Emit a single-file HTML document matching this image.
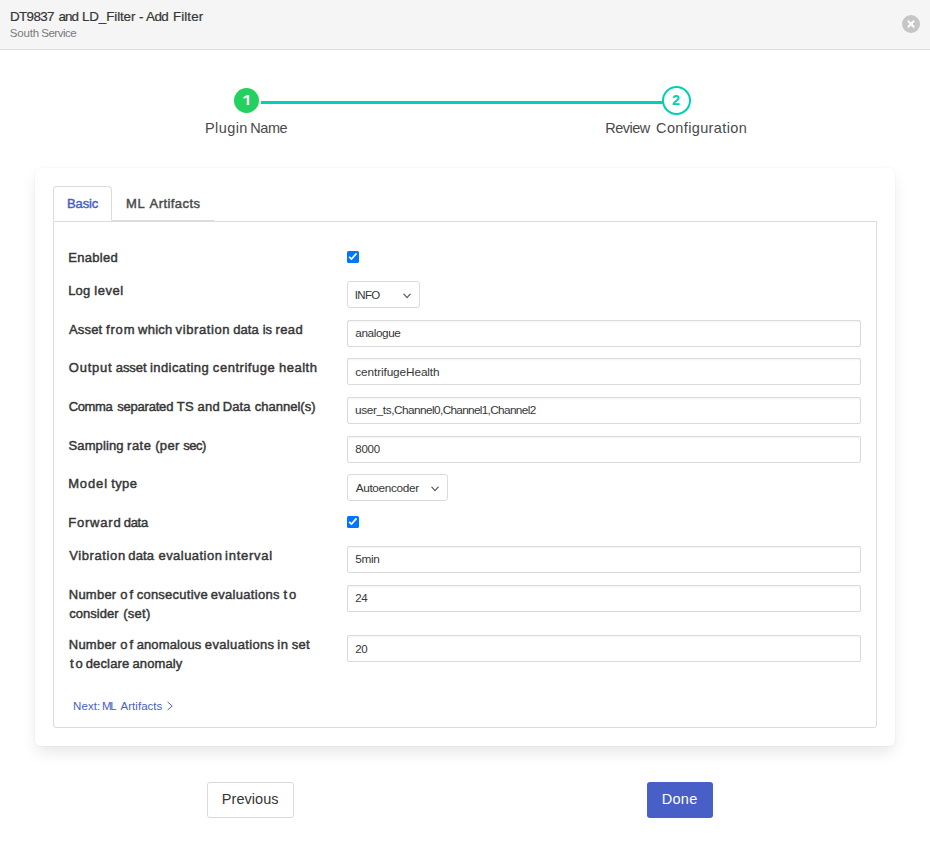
<!DOCTYPE html>
<html lang="en">
<head>
<meta charset="utf-8">
<title>DT9837 and LD_Filter - Add Filter</title>
<style>
*{box-sizing:border-box;margin:0;padding:0}
html,body{width:930px;height:859px;background:#fff;overflow:hidden}
body{font-family:"Liberation Sans",sans-serif;color:#4a4a4a;position:relative}
.t{position:absolute;white-space:nowrap;line-height:20px}
.hdr{position:absolute;left:0;top:0;width:930px;height:50px;background:#f5f5f5;border-bottom:1px solid #dbdbdb}
.close{position:absolute;left:902px;top:15px;width:18px;height:18px;border-radius:50%;background:#c6c6c6}
.close:before,.close:after{content:"";position:absolute;left:50%;top:50%;background:#fff;transform:translate(-50%,-50%) rotate(45deg)}
.close:before{width:9px;height:2px}
.close:after{width:2px;height:9px}
.line{position:absolute;left:261px;top:101px;width:402px;height:3px;background:#00d1b2}
.c1{position:absolute;left:234px;top:88px;width:25px;height:25px;border-radius:50%;background:#23d160}
.c2{position:absolute;left:662px;top:86px;width:29px;height:29px;border-radius:50%;background:#fff;border:2px solid #00d1b2}
.num{position:absolute;font-weight:bold;font-size:13.6px;line-height:20px}
.card{position:absolute;left:35px;top:168px;width:860px;height:578px;background:#fff;border-radius:6px;box-shadow:0 8px 16px -2px rgba(10,10,10,.1),0 0 0 1px rgba(10,10,10,.02)}
.panel{position:absolute;left:53px;top:221px;width:824px;height:507px;border:1px solid #dbdbdb;border-radius:0 0 3px 3px}
.tabline{position:absolute;left:112px;top:220px;width:102px;height:1px;background:#dbdbdb}
.tab1{position:absolute;left:53px;top:186px;width:59px;height:35px;border:1px solid #dbdbdb;border-bottom:1px solid #fff;border-radius:4px 4px 0 0;background:#fff}
.inp{position:absolute;left:347px;width:514px;height:27px;border:1px solid #dbdbdb;border-radius:2px;background:#fff;box-shadow:inset 0 1px 2px rgba(10,10,10,.05)}
.sel{position:absolute;left:347px;height:27px;border:1px solid #dbdbdb;border-radius:3px;background:#fff}
.sel svg{position:absolute;right:7px;top:10.7px}
.chk{position:absolute;left:347px;width:12px;height:12px;border-radius:1.6px;background:#0075ff}
.chk svg{position:absolute;left:0;top:0}
.btn{position:absolute;top:782px;height:36px;border-radius:3px}
.prev{left:207px;width:87px;border:1px solid #dbdbdb;background:#fff}
.done{left:647px;width:66px;background:#485fc7}
</style>
</head>
<body>
<div class="hdr"></div>
<div class="close"></div>
<div class="line"></div>
<div class="c1"></div>
<div class="c2"></div>
<svg style="position:absolute;left:240px;top:92px" width="14" height="16" viewBox="0 0 14 16"><path d="M7.0 2.9 L9.2 2.9 L9.2 13.1 L6.8 13.1 L6.8 5.5 L3.9 6.8 L3.2 5.2 Z" fill="#fff"/></svg>
<div class="num" style="left:672.1px;top:89.7px;font-size:14.4px;color:#00d1b2">2</div>
<div class="card"></div>
<div class="panel"></div>
<div class="tabline"></div>
<div class="tab1"></div>
<div class="chk" style="top:251px"><svg width="12" height="12" viewBox="0 0 12 12"><path d="M2.1 5.8 L4.5 8.1 L9.5 2.4" fill="none" stroke="#fff" stroke-width="1.7"/></svg></div>
<div class="chk" style="top:516px"><svg width="12" height="12" viewBox="0 0 12 12"><path d="M2.1 5.8 L4.5 8.1 L9.5 2.4" fill="none" stroke="#fff" stroke-width="1.7"/></svg></div>
<div class="sel" style="top:281px;width:73px"><svg width="10" height="7" viewBox="0 0 10 7"><path d="M0.8 0.8 L2.4 0.8 L5.05 3.7 L7.7 0.8 L9.3 0.8 L5.05 5.5 Z" fill="#5a5a5a"/></svg></div>
<div class="sel" style="top:474px;width:101px"><svg width="10" height="7" viewBox="0 0 10 7"><path d="M0.8 0.8 L2.4 0.8 L5.05 3.7 L7.7 0.8 L9.3 0.8 L5.05 5.5 Z" fill="#5a5a5a"/></svg></div>
<div class="inp" style="top:320px"></div>
<div class="inp" style="top:358px"></div>
<div class="inp" style="top:397px"></div>
<div class="inp" style="top:436px"></div>
<div class="inp" style="top:546px"></div>
<div class="inp" style="top:585px"></div>
<div class="inp" style="top:635px"></div>
<svg style="position:absolute;left:166px;top:701px" width="8" height="10" viewBox="0 0 8 10"><path d="M1.6 1 L6.2 5 L1.6 9" fill="none" stroke="#485fc7" stroke-width="1"/></svg>
<div class="btn prev"></div>
<div class="btn done"></div>
<div class="t" style="left:9.97px;top:6.56px;font-size:13.4px;font-weight:normal;color:#363636;letter-spacing:-0.614px;-webkit-text-stroke:0.2px #363636;">DT9837</div>
<div class="t" style="left:58.40px;top:6.56px;font-size:13.4px;font-weight:normal;color:#363636;letter-spacing:-0.872px;-webkit-text-stroke:0.2px #363636;">and</div>
<div class="t" style="left:81.97px;top:6.56px;font-size:13.4px;font-weight:normal;color:#363636;letter-spacing:-0.109px;-webkit-text-stroke:0.2px #363636;">LD_Filter</div>
<div class="t" style="left:138.94px;top:6.56px;font-size:13.4px;font-weight:normal;color:#363636;letter-spacing:0.000px;-webkit-text-stroke:0.2px #363636;">-</div>
<div class="t" style="left:146.09px;top:6.56px;font-size:13.4px;font-weight:normal;color:#363636;letter-spacing:-0.596px;-webkit-text-stroke:0.2px #363636;">Add</div>
<div class="t" style="left:172.97px;top:6.56px;font-size:13.4px;font-weight:normal;color:#363636;letter-spacing:0.082px;-webkit-text-stroke:0.2px #363636;">Filter</div>
<div class="t" style="left:9.78px;top:23.42px;font-size:11.5px;font-weight:normal;color:#7a7a7a;letter-spacing:-0.154px;">South</div>
<div class="t" style="left:41.31px;top:23.42px;font-size:11.5px;font-weight:normal;color:#7a7a7a;letter-spacing:-0.498px;">Service</div>
<div class="t" style="left:205.00px;top:117.88px;font-size:14.5px;font-weight:normal;color:#4a4a4a;letter-spacing:0.421px;">Plugin</div>
<div class="t" style="left:250.35px;top:117.88px;font-size:14.5px;font-weight:normal;color:#4a4a4a;letter-spacing:-0.483px;">Name</div>
<div class="t" style="left:605.35px;top:117.88px;font-size:14.5px;font-weight:normal;color:#4a4a4a;letter-spacing:-0.547px;">Review</div>
<div class="t" style="left:656.10px;top:117.88px;font-size:14.5px;font-weight:normal;color:#4a4a4a;letter-spacing:0.364px;">Configuration</div>
<div class="t" style="left:67.06px;top:193.50px;font-size:13px;font-weight:normal;color:#485fc7;letter-spacing:-0.119px;-webkit-text-stroke:0.45px #485fc7;">Basic</div>
<div class="t" style="left:126.09px;top:193.50px;font-size:13px;font-weight:normal;color:#4a4a4a;letter-spacing:0.506px;-webkit-text-stroke:0.45px #4a4a4a;">ML</div>
<div class="t" style="left:149.59px;top:193.50px;font-size:13px;font-weight:normal;color:#4a4a4a;letter-spacing:0.427px;-webkit-text-stroke:0.45px #4a4a4a;">Artifacts</div>
<div class="t" style="left:68.23px;top:247.50px;font-size:13px;font-weight:normal;color:#363636;letter-spacing:0.299px;-webkit-text-stroke:0.45px #363636;">Enabled</div>
<div class="t" style="left:68.34px;top:280.50px;font-size:13px;font-weight:normal;color:#363636;letter-spacing:0.056px;-webkit-text-stroke:0.45px #363636;">Log</div>
<div class="t" style="left:94.30px;top:280.50px;font-size:13px;font-weight:normal;color:#363636;letter-spacing:0.547px;-webkit-text-stroke:0.45px #363636;">level</div>
<div class="t" style="left:68.95px;top:319.50px;font-size:13px;font-weight:normal;color:#363636;letter-spacing:0.179px;-webkit-text-stroke:0.45px #363636;">Asset</div>
<div class="t" style="left:105.97px;top:319.50px;font-size:13px;font-weight:normal;color:#363636;letter-spacing:0.855px;-webkit-text-stroke:0.45px #363636;">from</div>
<div class="t" style="left:137.98px;top:319.50px;font-size:13px;font-weight:normal;color:#363636;letter-spacing:0.282px;-webkit-text-stroke:0.45px #363636;">which</div>
<div class="t" style="left:175.61px;top:319.50px;font-size:13px;font-weight:normal;color:#363636;letter-spacing:0.595px;-webkit-text-stroke:0.45px #363636;">vibration</div>
<div class="t" style="left:233.35px;top:319.50px;font-size:13px;font-weight:normal;color:#363636;letter-spacing:-0.002px;-webkit-text-stroke:0.45px #363636;">data</div>
<div class="t" style="left:262.78px;top:319.50px;font-size:13px;font-weight:normal;color:#363636;letter-spacing:-0.258px;-webkit-text-stroke:0.45px #363636;">is</div>
<div class="t" style="left:275.42px;top:319.50px;font-size:13px;font-weight:normal;color:#363636;letter-spacing:0.433px;-webkit-text-stroke:0.45px #363636;">read</div>
<div class="t" style="left:68.82px;top:357.50px;font-size:13px;font-weight:normal;color:#363636;letter-spacing:0.741px;-webkit-text-stroke:0.45px #363636;">Output</div>
<div class="t" style="left:115.75px;top:357.50px;font-size:13px;font-weight:normal;color:#363636;letter-spacing:-0.070px;-webkit-text-stroke:0.45px #363636;">asset</div>
<div class="t" style="left:150.00px;top:357.50px;font-size:13px;font-weight:normal;color:#363636;letter-spacing:0.417px;-webkit-text-stroke:0.45px #363636;">indicating</div>
<div class="t" style="left:212.87px;top:357.50px;font-size:13px;font-weight:normal;color:#363636;letter-spacing:0.523px;-webkit-text-stroke:0.45px #363636;">centrifuge</div>
<div class="t" style="left:279.00px;top:357.50px;font-size:13px;font-weight:normal;color:#363636;letter-spacing:0.504px;-webkit-text-stroke:0.45px #363636;">health</div>
<div class="t" style="left:68.79px;top:396.50px;font-size:13px;font-weight:normal;color:#363636;letter-spacing:-0.404px;-webkit-text-stroke:0.45px #363636;">Comma</div>
<div class="t" style="left:117.32px;top:396.50px;font-size:13px;font-weight:normal;color:#363636;letter-spacing:-0.222px;-webkit-text-stroke:0.45px #363636;">separated</div>
<div class="t" style="left:176.78px;top:396.50px;font-size:13px;font-weight:normal;color:#363636;letter-spacing:0.257px;-webkit-text-stroke:0.45px #363636;">TS</div>
<div class="t" style="left:197.43px;top:396.50px;font-size:13px;font-weight:normal;color:#363636;letter-spacing:0.363px;-webkit-text-stroke:0.45px #363636;">and</div>
<div class="t" style="left:222.74px;top:396.50px;font-size:13px;font-weight:normal;color:#363636;letter-spacing:0.082px;-webkit-text-stroke:0.45px #363636;">Data</div>
<div class="t" style="left:254.71px;top:396.50px;font-size:13px;font-weight:normal;color:#363636;letter-spacing:0.014px;-webkit-text-stroke:0.45px #363636;">channel(s)</div>
<div class="t" style="left:68.52px;top:435.50px;font-size:13px;font-weight:normal;color:#363636;letter-spacing:0.109px;-webkit-text-stroke:0.45px #363636;">Sampling</div>
<div class="t" style="left:127.07px;top:435.50px;font-size:13px;font-weight:normal;color:#363636;letter-spacing:0.485px;-webkit-text-stroke:0.45px #363636;">rate</div>
<div class="t" style="left:155.20px;top:435.50px;font-size:13px;font-weight:normal;color:#363636;letter-spacing:0.316px;-webkit-text-stroke:0.45px #363636;">(per</div>
<div class="t" style="left:183.36px;top:435.50px;font-size:13px;font-weight:normal;color:#363636;letter-spacing:-0.558px;-webkit-text-stroke:0.45px #363636;">sec)</div>
<div class="t" style="left:68.13px;top:473.50px;font-size:13px;font-weight:normal;color:#363636;letter-spacing:0.887px;-webkit-text-stroke:0.45px #363636;">Model</div>
<div class="t" style="left:111.21px;top:473.50px;font-size:13px;font-weight:normal;color:#363636;letter-spacing:0.401px;-webkit-text-stroke:0.45px #363636;">type</div>
<div class="t" style="left:68.23px;top:512.50px;font-size:13px;font-weight:normal;color:#363636;letter-spacing:0.799px;-webkit-text-stroke:0.45px #363636;">Forward</div>
<div class="t" style="left:123.86px;top:512.50px;font-size:13px;font-weight:normal;color:#363636;letter-spacing:-0.349px;-webkit-text-stroke:0.45px #363636;">data</div>
<div class="t" style="left:69.17px;top:545.50px;font-size:13px;font-weight:normal;color:#363636;letter-spacing:0.610px;-webkit-text-stroke:0.45px #363636;">Vibration</div>
<div class="t" style="left:128.35px;top:545.50px;font-size:13px;font-weight:normal;color:#363636;letter-spacing:0.122px;-webkit-text-stroke:0.45px #363636;">data</div>
<div class="t" style="left:158.45px;top:545.50px;font-size:13px;font-weight:normal;color:#363636;letter-spacing:0.464px;-webkit-text-stroke:0.45px #363636;">evaluation</div>
<div class="t" style="left:225.12px;top:545.50px;font-size:13px;font-weight:normal;color:#363636;letter-spacing:0.723px;-webkit-text-stroke:0.45px #363636;">interval</div>
<div class="t" style="left:68.75px;top:584.50px;font-size:13px;font-weight:normal;color:#363636;letter-spacing:0.238px;-webkit-text-stroke:0.45px #363636;">Number</div>
<div class="t" style="left:120.35px;top:584.50px;font-size:13px;font-weight:normal;color:#363636;letter-spacing:1.974px;-webkit-text-stroke:0.45px #363636;">of</div>
<div class="t" style="left:136.67px;top:584.50px;font-size:13px;font-weight:normal;color:#363636;letter-spacing:0.246px;-webkit-text-stroke:0.45px #363636;">consecutive</div>
<div class="t" style="left:210.71px;top:584.50px;font-size:13px;font-weight:normal;color:#363636;letter-spacing:0.309px;-webkit-text-stroke:0.45px #363636;">evaluations</div>
<div class="t" style="left:283.61px;top:584.50px;font-size:13px;font-weight:normal;color:#363636;letter-spacing:1.657px;-webkit-text-stroke:0.45px #363636;">to</div>
<div class="t" style="left:69.27px;top:603.50px;font-size:13px;font-weight:normal;color:#363636;letter-spacing:0.034px;-webkit-text-stroke:0.45px #363636;">consider</div>
<div class="t" style="left:123.17px;top:603.50px;font-size:13px;font-weight:normal;color:#363636;letter-spacing:0.285px;-webkit-text-stroke:0.45px #363636;">(set)</div>
<div class="t" style="left:68.75px;top:634.50px;font-size:13px;font-weight:normal;color:#363636;letter-spacing:0.238px;-webkit-text-stroke:0.45px #363636;">Number</div>
<div class="t" style="left:120.35px;top:634.50px;font-size:13px;font-weight:normal;color:#363636;letter-spacing:1.974px;-webkit-text-stroke:0.45px #363636;">of</div>
<div class="t" style="left:136.64px;top:634.50px;font-size:13px;font-weight:normal;color:#363636;letter-spacing:0.141px;-webkit-text-stroke:0.45px #363636;">anomalous</div>
<div class="t" style="left:204.87px;top:634.50px;font-size:13px;font-weight:normal;color:#363636;letter-spacing:0.349px;-webkit-text-stroke:0.45px #363636;">evaluations</div>
<div class="t" style="left:277.25px;top:634.50px;font-size:13px;font-weight:normal;color:#363636;letter-spacing:0.551px;-webkit-text-stroke:0.45px #363636;">in</div>
<div class="t" style="left:291.72px;top:634.50px;font-size:13px;font-weight:normal;color:#363636;letter-spacing:0.254px;-webkit-text-stroke:0.45px #363636;">set</div>
<div class="t" style="left:69.94px;top:653.50px;font-size:13px;font-weight:normal;color:#363636;letter-spacing:1.891px;-webkit-text-stroke:0.45px #363636;">to</div>
<div class="t" style="left:85.67px;top:653.50px;font-size:13px;font-weight:normal;color:#363636;letter-spacing:0.160px;-webkit-text-stroke:0.45px #363636;">declare</div>
<div class="t" style="left:132.46px;top:653.50px;font-size:13px;font-weight:normal;color:#363636;letter-spacing:0.107px;-webkit-text-stroke:0.45px #363636;">anomaly</div>
<div class="t" style="left:354.67px;top:285.02px;font-size:11.5px;font-weight:normal;color:#363636;letter-spacing:-0.618px;">INFO</div>
<div class="t" style="left:355.28px;top:322.91px;font-size:11.8px;font-weight:normal;color:#363636;letter-spacing:-0.412px;">analogue</div>
<div class="t" style="left:355.25px;top:361.91px;font-size:11.8px;font-weight:normal;color:#363636;letter-spacing:-0.104px;">centrifugeHealth</div>
<div class="t" style="left:355.04px;top:399.91px;font-size:11.8px;font-weight:normal;color:#363636;letter-spacing:-0.361px;">user_ts,</div>
<div class="t" style="left:394.08px;top:399.91px;font-size:11.8px;font-weight:normal;color:#363636;letter-spacing:-0.573px;">Channel0,</div>
<div class="t" style="left:442.66px;top:399.91px;font-size:11.8px;font-weight:normal;color:#363636;letter-spacing:-0.703px;">Channel1,</div>
<div class="t" style="left:490.15px;top:399.91px;font-size:11.8px;font-weight:normal;color:#363636;letter-spacing:-0.627px;">Channel2</div>
<div class="t" style="left:355.35px;top:439.02px;font-size:11.5px;font-weight:normal;color:#363636;letter-spacing:-0.270px;">8000</div>
<div class="t" style="left:355.70px;top:477.91px;font-size:11.8px;font-weight:normal;color:#363636;letter-spacing:-0.344px;">Autoencoder</div>
<div class="t" style="left:355.13px;top:548.91px;font-size:11.8px;font-weight:normal;color:#363636;letter-spacing:-0.277px;">5min</div>
<div class="t" style="left:355.26px;top:588.02px;font-size:11.5px;font-weight:normal;color:#363636;letter-spacing:-0.442px;">24</div>
<div class="t" style="left:355.23px;top:639.02px;font-size:11.5px;font-weight:normal;color:#363636;letter-spacing:-0.374px;">20</div>
<div class="t" style="left:72.97px;top:696.02px;font-size:11.5px;font-weight:normal;color:#485fc7;letter-spacing:0.104px;">Next:</div>
<div class="t" style="left:101.91px;top:696.02px;font-size:11.5px;font-weight:normal;color:#485fc7;letter-spacing:-1.211px;">ML</div>
<div class="t" style="left:120.57px;top:696.02px;font-size:11.5px;font-weight:normal;color:#485fc7;letter-spacing:0.027px;">Artifacts</div>
<div class="t" style="left:221.84px;top:789.08px;font-size:14.5px;font-weight:normal;color:#363636;letter-spacing:0.042px;">Previous</div>
<div class="t" style="left:661.84px;top:789.08px;font-size:14.5px;font-weight:normal;color:#ffffff;letter-spacing:0.255px;">Done</div>
</body>
</html>
